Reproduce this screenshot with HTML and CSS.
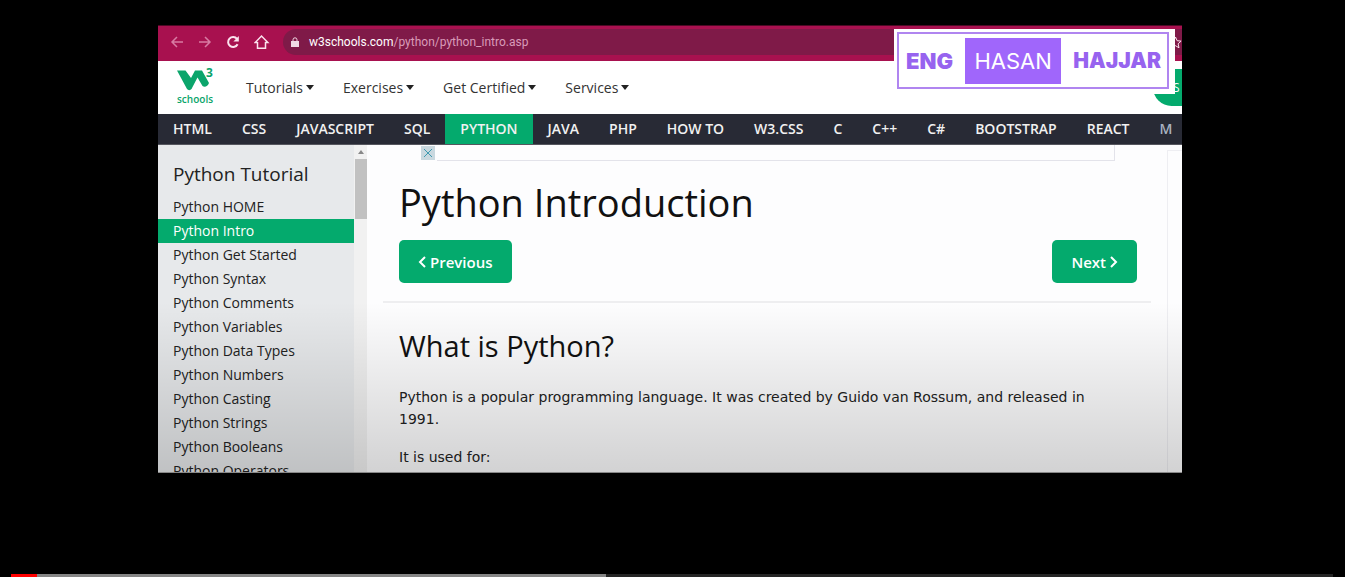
FILE: index.html
```
<!DOCTYPE html>
<html lang="en">
<head>
<meta charset="utf-8">
<title>Python Introduction</title>
<link rel="stylesheet" href="styles.css">
</head>
<body>
<div class="player">
  <div class="screen">
    <div class="browser">
      <button class="tool dim" aria-label="Back"><svg width="14" height="14" viewBox="0 0 14 14"><path d="M13 7H2M7 2L2 7l5 5"/></svg></button>
      <button class="tool dim" aria-label="Forward"><svg width="14" height="14" viewBox="0 0 14 14"><path d="M1 7h11M7 2l5 5-5 5"/></svg></button>
      <button class="tool" aria-label="Reload"><svg width="14" height="14" viewBox="0 0 14 14"><path class="thick" d="M11.600 9.200A5 5 0 1 1 11 3.800"/><path class="solid" d="M12.800 1v5.600H7.400z"/></svg></button>
      <button class="tool" aria-label="Home"><svg width="16" height="16" viewBox="0 0 16 16"><path d="M3.500 8.500H1.200L7.500 2l6.300 6.500h-2.300M3.500 8v6.200h8V8"/></svg></button>
      <div class="address">
        <svg width="8" height="11" viewBox="0 0 8 11"><path class="solid" d="M0 4h8v6H0z"/><path d="M2 5V2.800a2 2 0 0 1 4 0V5"/></svg>
        <span><b>w3schools.com</b>/python/python_intro.asp</span>
      </div>
      <button class="star" aria-label="Bookmark"><svg width="13" height="13" viewBox="0 0 13 13"><path d="M6.500 1l1.600 3.700 4 .4-3 2.700.9 4-3.500-2.100L3 11.800l.9-4-3-2.700 4-.4z"/></svg></button>
    </div>
    <header class="header">
      <a class="logo" href="#" aria-label="w3schools home">
        <svg width="38" height="24" viewBox="0 0 38 24"><path d="M0 3.500h8.500L14 11l4-7.500h7L32 16c-1 3.500-4.500 4.500-6.500 3l-5-8.500L14.500 22c-1 1.500-3.500 1.500-4.500 0z"/></svg>
        <sup>3</sup>
        <span>schools</span>
      </a>
      <nav class="menu">
        <a href="#">Tutorials<i></i></a>
        <a href="#">Exercises<i></i></a>
        <a href="#">Get Certified<i></i></a>
        <a href="#">Services<i></i></a>
      </nav>
      <button class="signup" aria-label="Sign up">S</button>
    </header>
    <nav class="topics">
      <a href="#">HTML</a><a href="#">CSS</a><a href="#">JAVASCRIPT</a><a href="#">SQL</a><a class="active" href="#">PYTHON</a><a href="#">JAVA</a><a href="#">PHP</a><a href="#">HOW TO</a><a href="#">W3.CSS</a><a href="#">C</a><a href="#">C++</a><a href="#">C#</a><a href="#">BOOTSTRAP</a><a href="#">REACT</a><a class="faded" href="#">M</a>
    </nav>
    <div class="body">
      <aside class="sidebar">
        <h2>Python Tutorial</h2>
        <a href="#">Python HOME</a>
        <a class="active" href="#">Python Intro</a>
        <a href="#">Python Get Started</a>
        <a href="#">Python Syntax</a>
        <a href="#">Python Comments</a>
        <a href="#">Python Variables</a>
        <a href="#">Python Data Types</a>
        <a href="#">Python Numbers</a>
        <a href="#">Python Casting</a>
        <a href="#">Python Strings</a>
        <a href="#">Python Booleans</a>
        <a href="#">Python Operators</a>
      </aside>
      <div class="scrollbar"><i></i><span></span></div>
      <main class="main">
        <div class="ad"><button aria-label="Close ad"><svg width="10" height="10" viewBox="0 0 10 10"><path d="M1 1l8 8M9 1L1 9"/></svg></button><div></div></div>
        <h1>Python Introduction</h1>
        <div class="pager">
          <button><svg width="8" height="12" viewBox="0 0 8 12"><path d="M7 1L2 6l5 5"/></svg>Previous</button>
          <button>Next<svg width="8" height="12" viewBox="0 0 8 12"><path d="M1 1l5 5-5 5"/></svg></button>
        </div>
        <hr>
        <h2>What is Python?</h2>
        <p>Python is a popular programming language. It was created by Guido van Rossum, and released in 1991.</p>
        <p>It is used for:</p>
      </main>
      <div class="rail"></div>
    </div>
    <div class="watermark"><div><b class="heavy">ENG</b><span>HASAN</span><b>HAJJAR</b></div></div>
  </div>
  <div class="progress"><span class="played"></span><span class="loaded"></span></div>
</div>
</body>
</html>
```
FILE: styles.css
```
* { box-sizing: border-box; }
body { margin: 0; background: #000; font-family: "Open Sans", "Noto Sans", sans-serif; }
a { color: inherit; text-decoration: none; }
button { border: 0; padding: 0; background: none; font: inherit; color: inherit; }
svg { fill: none; stroke: currentColor; stroke-width: 2; display: block; flex: none; }
.player { min-height: 100vh; padding-top: 25px; display: flex; flex-direction: column; justify-content: space-between; }
.screen { position: relative; margin: 0 163px 0 158px; aspect-ratio: 1024 / 448; overflow: hidden; display: flex; flex-direction: column; background: #fdfdfe; border-bottom: 1px solid #888; }
.screen::after { content: ""; position: absolute; inset: 62% 0 0; background: linear-gradient(transparent, rgba(0, 0, 0, .17)); pointer-events: none; }

.browser { flex: none; height: 36px; display: flex; align-items: center; padding: 0 0 3px 12px; background: #a8114f; border-top: 1px solid #4d0824; color: #fbe3ee; }
.tool { width: 28px; height: 24px; display: flex; align-items: center; }
.tool svg { stroke-width: 1.5; }
.dim { color: #d87ba3; }
.tool .thick { stroke-width: 2; }
.solid { fill: currentColor; stroke: none; }
.address { flex: 1; height: 26px; margin-left: 1px; padding-left: 8px; display: flex; align-items: center; gap: 10px; border-radius: 13px 0 0 13px; background: #7f1a48; font: 12px Roboto, sans-serif; color: #d99bb8; }
.address svg { stroke-width: 1; color: #f0d9e4; }
.address b { font-weight: 400; color: #fff; }
.star { width: 13px; height: 26px; background: #7f1a48; display: flex; align-items: center; }
.star svg { stroke-width: 1; }

.header { flex: none; height: 53px; display: flex; align-items: center; background: #fff; }
.logo { flex: none; width: 88px; height: 42px; padding-left: 19px; position: relative; color: #0ba56b; font-size: 10px; line-height: 12px; }
.logo svg { fill: currentColor; stroke: none; }
.logo sup { position: absolute; left: 48px; top: 0; font: 700 12px/12px "Open Sans", sans-serif; }
.logo span { display: block; padding-top: 2px; font-weight: 600; }
.menu { flex: 1; display: flex; gap: 29px; color: #333; font-size: 14px; }
.menu a { display: flex; align-items: center; gap: 3px; }
.menu i { border: 4px solid transparent; border-top: 5px solid #222; border-bottom: 0; }
.signup { flex: none; width: 29px; height: 37px; padding-left: 20px; border-radius: 19px 0 0 19px; background: #04aa6d; color: #fff; font-size: 12px; text-align: left; }

.topics { flex: none; height: 31px; display: flex; background: #282a35; border-bottom: 1px solid #55565e; color: #f1f1f1; font-size: 14px; font-weight: 600; line-height: 30px; white-space: nowrap; overflow: hidden; }
.topics a { padding: 0 15px; }
.topics .active { background: #04aa6d; }
.topics .faded { padding-right: 0; color: #a9b2c0; }

.body { flex: 1; min-height: 0; display: flex; }
.sidebar { flex: none; width: 196px; padding-top: 15px; background: #e7e9eb; color: #222; overflow: hidden; }
.sidebar h2 { margin: 0 0 7px; padding-left: 15px; font-size: 19px; font-weight: 400; line-height: 28px; }
.sidebar a { display: block; padding-left: 15px; font-size: 14px; line-height: 24px; }
.sidebar .active { background: #04aa6d; color: #fff; }
.scrollbar { flex: none; width: 13px; padding: 5px 0 0 1px; background: #f1f1f1; }
.scrollbar i { display: block; width: 0; margin: 0 auto 5px; border: 3px solid transparent; border-top: 0; border-bottom: 4px solid #888; }
.scrollbar span { display: block; height: 60px; background: #c1c1c1; }
.main { flex: 1; padding: 0 16px; margin: 0 16px; color: #111; }
.ad { display: flex; align-items: center; height: 16px; margin-left: 22px; margin-right: 20px; }
.ad button { flex: none; width: 14px; height: 14px; padding: 2px; background: #c9d8df; color: #3f9ab0; }
.ad svg { stroke-width: 1; }
.ad div { flex: 1; height: 16px; margin-left: 2px; border: 1px solid #e3e3ea; border-width: 0 1px 1px 0; }
.main h1 { margin: 15px 0 11px; font-size: 38px; font-weight: 400; line-height: 53px; }
.pager { display: flex; justify-content: space-between; margin-right: -2px; }
.pager button { height: 43px; padding: 0 19px; display: flex; align-items: center; gap: 4px; border-radius: 5px; background: #04aa6d; color: #fff; font-size: 15px; font-weight: 600; }
.main hr { margin: 18px -16px 0; border: 0; border-top: 2px solid #eeeef0; }
.main h2 { margin: 22px 0 19px; font-size: 29px; font-weight: 400; line-height: 42px; }
.main p { margin: 0 0 16px; padding-right: 16px; font: 14px/22px "DejaVu Sans", Verdana, sans-serif; color: #222; }
.rail { flex: none; width: 15px; margin-top: 5px; border-left: 1px solid #eeeef2; border-top: 1px solid #eeeef2; }

.watermark { position: absolute; top: 4px; right: 7px; width: 281px; padding: 3px 6px 5px 3px; background: #fff; z-index: 1; }
.watermark div { height: 57px; padding: 0 6px 0 7px; display: flex; align-items: center; justify-content: space-between; border: 2px solid #b085f0; color: #9763ef; font: 800 21px Inter, sans-serif; }
.watermark span { padding: 0 9px; line-height: 46px; background: #a066fb; color: #fff; font-size: 22px; font-weight: 400; }
.watermark .heavy { font-size: 22px; font-weight: 900; }

.progress { height: 3px; margin: 0 12px 0 11px; display: flex; background: #252525; }
.played { width: 2%; background: #f00; }
.loaded { width: 43%; background: #858585; }
```
